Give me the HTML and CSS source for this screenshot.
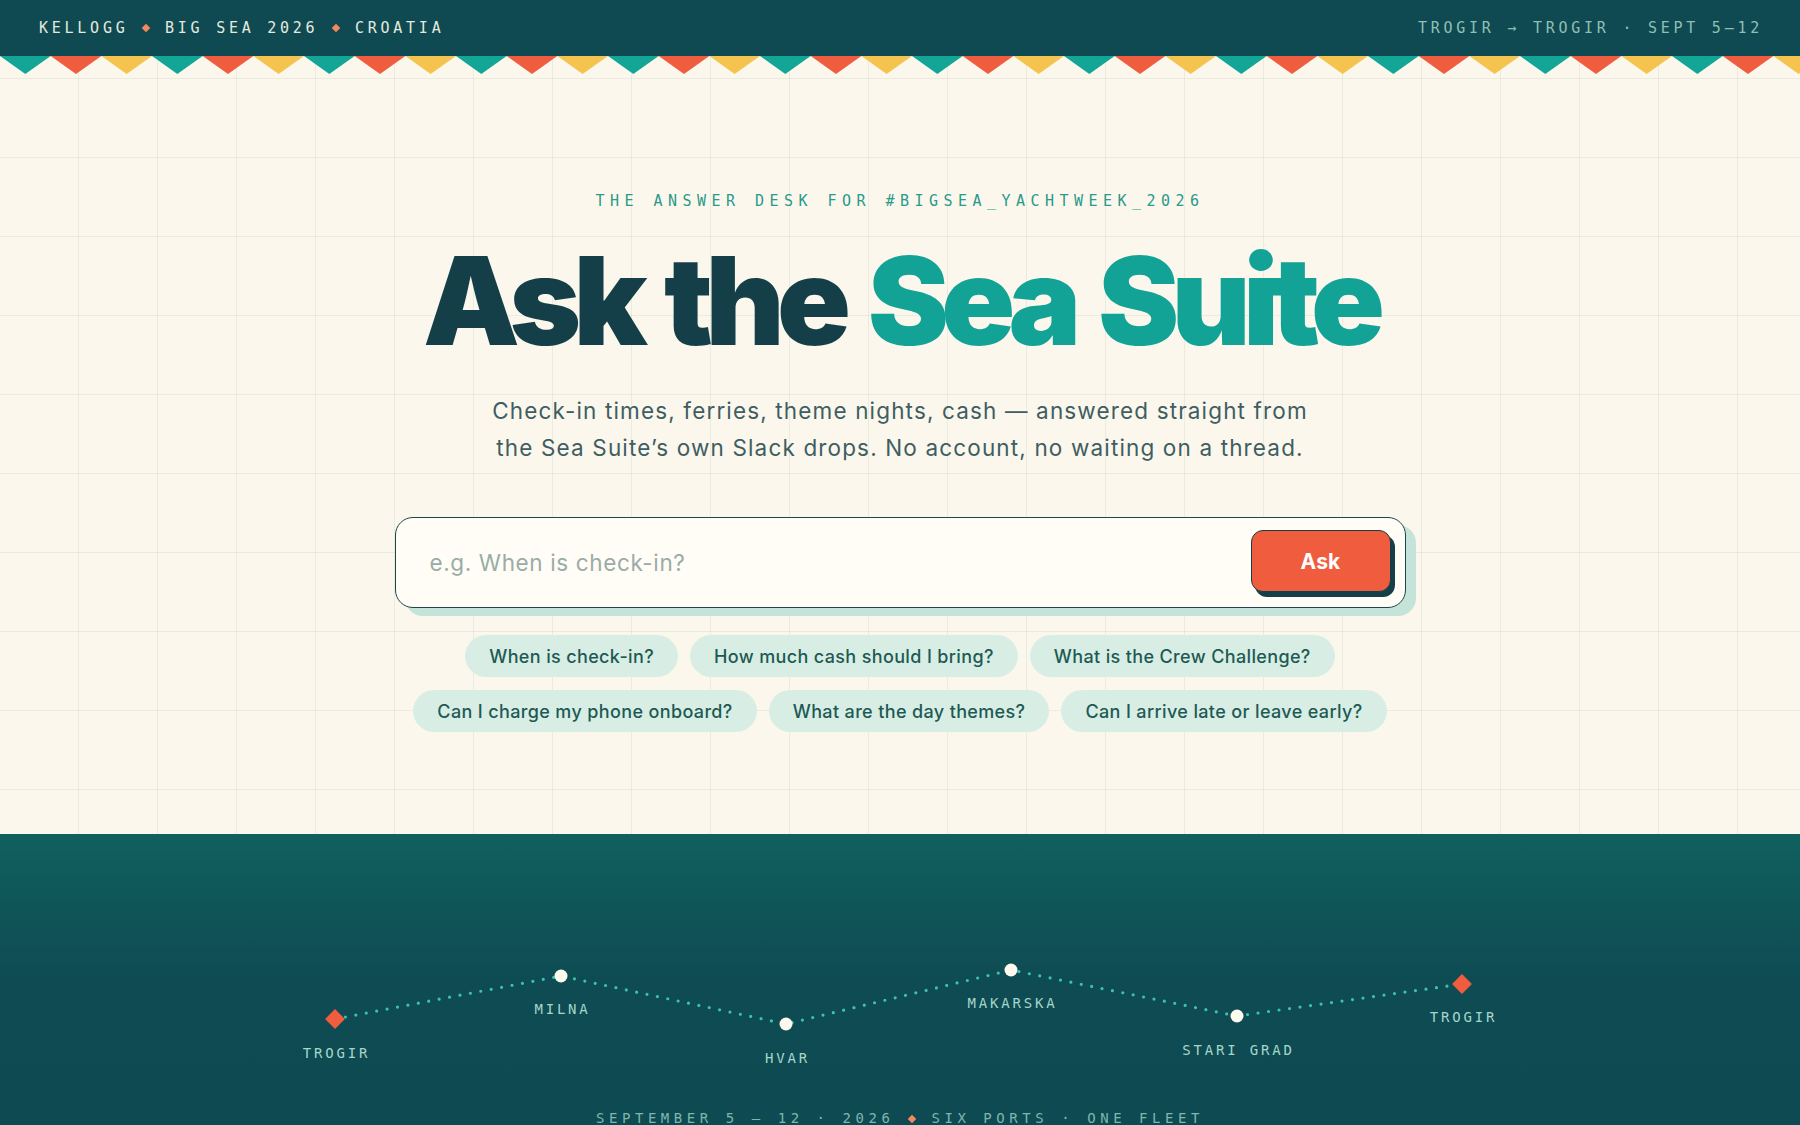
FILE: index.html
```html
<!DOCTYPE html>
<html lang="en">
<head>
<meta charset="utf-8">
<title>Ask the Sea Suite</title>
<link rel="stylesheet" href="styles.css">
</head>
<body>
<header class="topbar">
  <div class="brand">KELLOGG <span class="dia"></span> BIG SEA 2026 <span class="dia"></span> CROATIA</div>
  <div class="trip">TROGIR → TROGIR · SEPT 5–12</div>
</header>
<main class="hero">
  <svg class="bunting" width="100%" height="18" aria-hidden="true">
    <defs>
      <pattern id="flags" x="0" y="0" width="152" height="18" patternUnits="userSpaceOnUse">
        <polygon points="0,0 50.67,0 25.33,18" fill="#13a595"/>
        <polygon points="50.67,0 101.33,0 76,18" fill="#f05d3e"/>
        <polygon points="101.33,0 152,0 126.67,18" fill="#f5c44f"/>
      </pattern>
    </defs>
    <rect x="0" y="0" width="100%" height="18" fill="url(#flags)"/>
  </svg>
  <p class="eyebrow">THE ANSWER DESK FOR #BIGSEA_YACHTWEEK_2026</p>
  <h1 class="title">Ask the <span class="accent">Sea Suite</span></h1>
  <p class="lede">Check-in times, ferries, theme nights, cash — answered straight from<br>the Sea Suite’s own Slack drops. No account, no waiting on a thread.</p>
  <form class="ask">
    <input class="ask-input" type="text" placeholder="e.g. When is check-in?">
    <button class="ask-btn" type="button">Ask</button>
  </form>
  <div class="chips">
    <span class="chip">When is check-in?</span>
    <span class="chip">How much cash should I bring?</span>
    <span class="chip">What is the Crew Challenge?</span>
    <span class="chip">Can I charge my phone onboard?</span>
    <span class="chip">What are the day themes?</span>
    <span class="chip">Can I arrive late or leave early?</span>
  </div>
</main>
<section class="route">
  <svg class="route-map" width="1200" height="140" viewBox="0 0 1200 140">
    <polyline points="35,69 261,26 486,74 711,20 937,66 1162,34" fill="none" stroke="#3cc2b1" stroke-width="3.2" stroke-linecap="round" stroke-dasharray="0 10.6"/>
    <rect x="28" y="62" width="14" height="14" fill="#f05d3e" transform="rotate(45 35 69)"/>
    <circle cx="261" cy="26" r="6.5" fill="#fdf9ec"/>
    <circle cx="486" cy="74" r="6.5" fill="#fdf9ec"/>
    <circle cx="711" cy="20" r="6.5" fill="#fdf9ec"/>
    <circle cx="937" cy="66" r="6.5" fill="#fdf9ec"/>
    <rect x="1155" y="27" width="14" height="14" fill="#f05d3e" transform="rotate(45 1162 34)"/>
    <g class="port">
      <text x="36.5" y="108">TROGIR</text>
      <text x="262.5" y="64">MILNA</text>
      <text x="487.5" y="113">HVAR</text>
      <text x="712.5" y="58">MAKARSKA</text>
      <text x="938.5" y="105">STARI GRAD</text>
      <text x="1163.5" y="72">TROGIR</text>
    </g>
  </svg>
  <p class="tagline">SEPTEMBER 5 – 12 · 2026 <span class="dia"></span> SIX PORTS · ONE FLEET</p>
</section>
</body>
</html>
```

FILE: styles.css
```css
* { box-sizing: border-box; }

html, body {
  margin: 0;
  padding: 0;
}

body {
  background: #fbf7ec;
  font-family: "Inter", "Noto Sans", sans-serif;
  color: #133f47;
}

.topbar {
  height: 56px;
  background: #0f4a52;
  display: flex;
  align-items: center;
  justify-content: space-between;
  padding: 0 37px 0 39px;
  font-family: "DejaVu Sans Mono", "Liberation Mono", monospace;
  font-size: 15px;
  letter-spacing: 0.25em;
}

.brand { color: #e4e9de; }
.trip { color: #8ebfb5; }

.dia {
  display: inline-block;
  width: 6px;
  height: 6px;
  background: #f28a5e;
  transform: rotate(45deg);
  margin: 0 3px 0 2px;
  vertical-align: 2px;
}

.hero {
  background-color: #fbf7ec;
  background-image:
    linear-gradient(to right, transparent 78px, rgba(30, 70, 70, 0.07) 78px),
    linear-gradient(to bottom, transparent 78px, rgba(30, 70, 70, 0.07) 78px);
  background-size: 79px 79px;
  background-position: 0 -56px;
  display: flex;
  flex-direction: column;
  align-items: center;
  padding-bottom: 102px;
}

.bunting {
  display: block;
  width: 100%;
  height: 18px;
  align-self: stretch;
}

.eyebrow {
  margin: 117px 0 0;
  font-family: "DejaVu Sans Mono", "Liberation Mono", monospace;
  font-size: 15px;
  line-height: 20px;
  letter-spacing: 0.365em;
  color: #2a9a8b;
}

.title {
  margin: 29px 0 0;
  font-family: "Inter", "Noto Sans", sans-serif;
  font-weight: 900;
  font-size: 122px;
  line-height: 1;
  letter-spacing: -0.064em;
  word-spacing: 8px;
  color: #143f48;
}

.accent { color: #12a396; }

.lede {
  margin: 30px 0 0;
  font-family: "Inter", "Noto Sans", sans-serif;
  font-size: 22.5px;
  line-height: 37px;
  letter-spacing: 0.051em;
  text-align: center;
  color: #3e5e62;
  font-weight: 400;
}

.ask {
  margin: 51px 0 0;
  width: 1011px;
  height: 91px;
  display: flex;
  align-items: center;
  justify-content: space-between;
  background: #fffdf6;
  border: 1.5px solid #1d454b;
  border-radius: 18px;
  box-shadow: 10px 8px 0 #c4e4d9;
  padding: 0 14px 0 34px;
}

.ask-input {
  flex: 1;
  border: none;
  background: transparent;
  outline: none;
  font-family: "Inter", "Noto Sans", sans-serif;
  font-size: 22.5px;
  letter-spacing: 0.028em;
  color: #143f48;
  padding: 0;
}

.ask-input::placeholder { color: #9aaca7; }

.ask-btn {
  width: 140px;
  height: 62px;
  background: #f05d3e;
  border: 1.5px solid #143f48;
  border-radius: 12px;
  box-shadow: 4px 5px 0 #143f48;
  color: #ffffff;
  font-family: "Inter", "Noto Sans", sans-serif;
  font-weight: 700;
  font-size: 21px;
  letter-spacing: 0.01em;
  margin-top: -3px;
}

.chips {
  margin-top: 27px;
  width: 1011px;
  display: flex;
  flex-wrap: wrap;
  justify-content: center;
  gap: 13px 12px;
}

.chip {
  height: 42px;
  display: inline-flex;
  align-items: center;
  padding: 0 24px;
  border-radius: 21px;
  background: #d8eee5;
  color: #1e5a54;
  font-size: 18px;
  font-weight: 500;
  letter-spacing: 0.02em;
}

.route {
  background: linear-gradient(180deg, #10605f 0%, #0f5558 22%, #0e4b53 45%, #0e4a52 100%);
  padding-top: 116px;
  padding-bottom: 40px;
  display: flex;
  flex-direction: column;
  align-items: center;
}

.route-map {
  display: block;
}

.port text {
  font-family: "DejaVu Sans Mono", "Liberation Mono", monospace;
  font-size: 14px;
  letter-spacing: 2.8px;
  fill: #a6d6cb;
  text-anchor: middle;
}

.tagline {
  margin: 18px 0 0;
  font-family: "DejaVu Sans Mono", "Liberation Mono", monospace;
  font-size: 14px;
  line-height: 20px;
  letter-spacing: 0.325em;
  color: #7fb6ad;
}

.tagline .dia {
  width: 6px;
  height: 6px;
  vertical-align: 1px;
}
```
